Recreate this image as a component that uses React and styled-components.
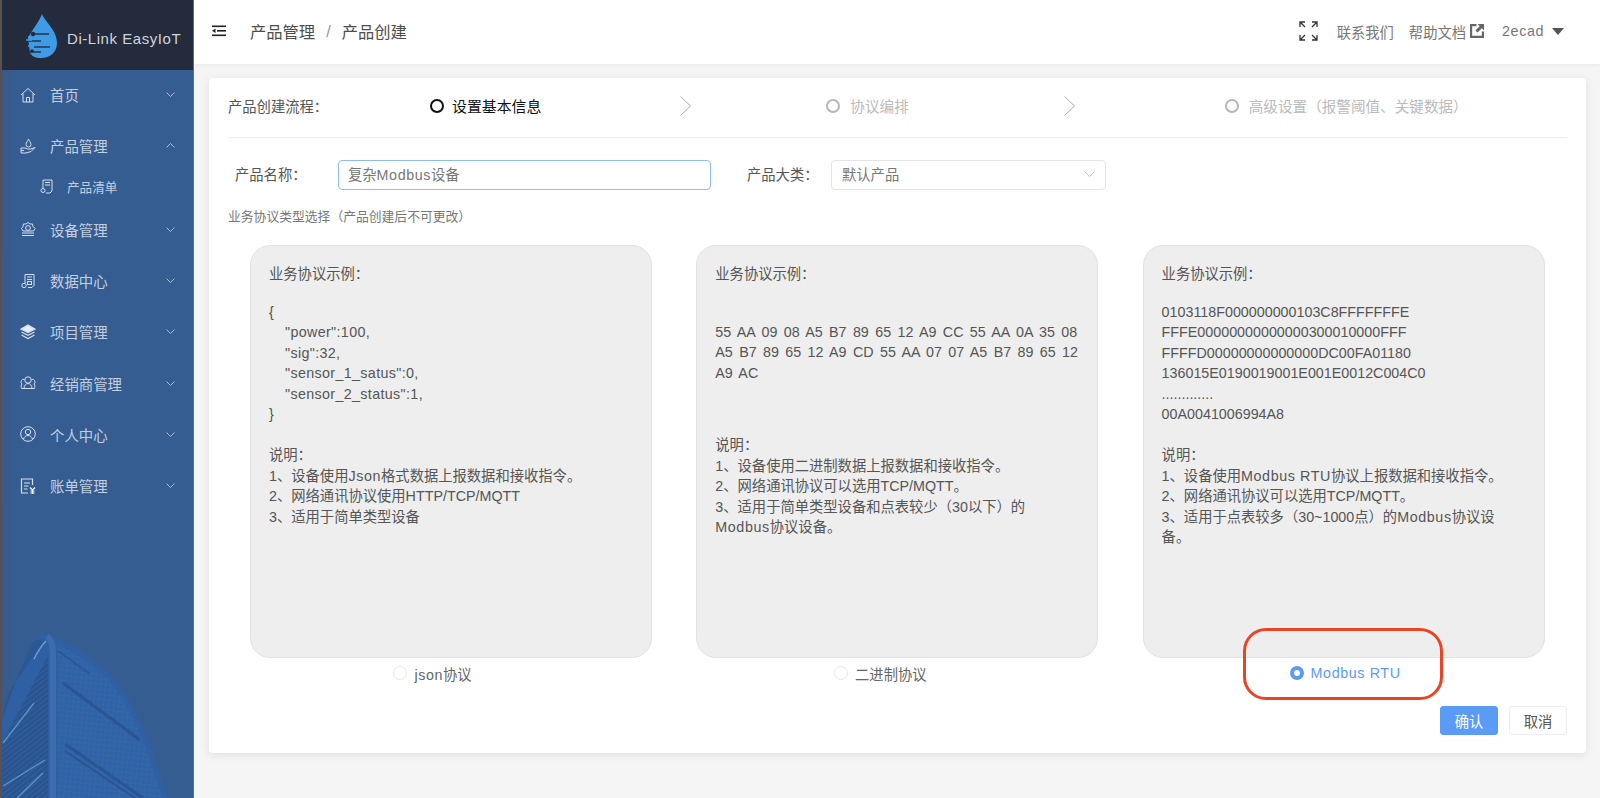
import React from "react";
import styled, { createGlobalStyle } from "styled-components";

const GlobalStyle = createGlobalStyle`
  html, body { margin: 0; padding: 0; height: 100%; }
  body {
    background: #f5f5f5;
    font-family: "Liberation Sans", "Noto Sans CJK SC", sans-serif;
    font-size: 14.3px;
    color: #555;
  }
`;

const Page = styled.div`
  display: flex;
  width: 1600px;
  height: 798px;
  overflow: hidden;
`;

/* sidebar */
const Sidebar = styled.aside`
  position: relative;
  flex: 0 0 194px;
  box-sizing: border-box;
  border-left: 2px solid #5b4f50;
  border-right: 1px solid #4670aa;
  background: linear-gradient(90deg, #3a5a88 0, #365d92 16px);
  overflow: hidden;
`;

const Brand = styled.div`
  display: flex;
  align-items: center;
  height: 70px;
  margin-right: -1px;
  padding-left: 23px;
  box-sizing: border-box;
  background: #242b3c;
`;

const BrandName = styled.span`
  margin-left: 9px;
  margin-top: 6px;
  font-size: 15px;
  letter-spacing: 0.55px;
  color: #d0d4db;
  white-space: nowrap;
`;

const MenuList = styled.nav`
  position: relative;
  z-index: 1;
  margin-top: -1px;
`;

const MenuRow = styled.div`
  display: flex;
  align-items: center;
  height: 51.3px;
  padding: 0 18px 0 18px;
  color: #c3d0e3;
  font-size: 14.4px;
`;

const SubRow = styled.div`
  display: flex;
  align-items: center;
  box-sizing: border-box;
  height: 32px;
  padding: 0 0 2px 38px;
  color: #c3d0e3;
  font-size: 12.6px;
`;

const MenuIcon = styled.svg`
  flex: 0 0 16px;
  width: 16px;
  height: 16px;
  margin-right: 14px;
  fill: none;
  stroke: #d5dfee;
  stroke-width: 1;
`;

const SubIcon = styled(MenuIcon)`
  flex: 0 0 13px;
  width: 13px;
  height: 15px;
  margin-right: 14px;
`;

const MenuLabel = styled.span`
  flex: 1;
  white-space: nowrap;
`;

const Fold = styled.svg`
  flex: 0 0 9px;
  width: 9px;
  height: 5px;
  fill: none;
  stroke: #a9bbd4;
  stroke-width: 1;
`;

const Skyline = styled.svg`
  position: absolute;
  left: -2px;
  bottom: 0;
  width: 194px;
  height: 165px;
`;

/* top bar */
const Main = styled.main`
  flex: 1;
  display: flex;
  flex-direction: column;
  min-width: 0;
`;

const TopBar = styled.header`
  display: flex;
  align-items: center;
  flex: 0 0 64px;
  box-sizing: border-box;
  padding: 0 36px 2px 18px;
  background: #fff;
  box-shadow: 0 1px 4px rgba(0, 0, 0, 0.06);
`;

const Crumbs = styled.div`
  display: flex;
  align-items: center;
  flex: 1;
  margin-left: 24px;
  font-size: 16.3px;
  color: #4d4d4d;
`;

const CrumbSep = styled.span`
  margin: 0 11px;
  color: #999;
`;

const TopLink = styled.span`
  display: inline-flex;
  align-items: center;
  color: #777;
  font-size: 14.3px;
  white-space: nowrap;
  margin-left: ${(p) => p.$gap}px;
  letter-spacing: ${(p) => p.$track || 0}px;
`;

const Caret = styled.span`
  width: 0;
  height: 0;
  margin-left: 8px;
  border-left: 6px solid transparent;
  border-right: 6px solid transparent;
  border-top: 7px solid #555;
`;

/* card */
const Content = styled.div`
  flex: 1;
  padding: 14px 14px 0 15px;
`;

const Card = styled.section`
  position: relative;
  box-sizing: border-box;
  height: 675px;
  padding: 0 19px;
  background: #fff;
  border-radius: 4px;
  box-shadow: 0 2px 10px rgba(0, 0, 0, 0.09);
`;

const StepsBar = styled.div`
  display: flex;
  align-items: center;
  height: 55px;
  padding-bottom: 4px;
  border-bottom: 1px solid #efefef;
`;

const StepsTitle = styled.span`
  flex: 0 0 202px;
  color: #555;
`;

const Step = styled.span`
  display: inline-flex;
  align-items: center;
  font-size: ${(p) => (p.$active ? "14.9px" : "14.6px")};
  color: ${(p) => (p.$active ? "#111" : "#bbb")};
  margin-right: ${(p) => p.$after}px;
  white-space: nowrap;
`;

const StepDot = styled.i`
  box-sizing: border-box;
  width: 14px;
  height: 14px;
  margin-right: ${(p) => (p.$active ? 8 : 10)}px;
  border-radius: 50%;
  border: 2px solid ${(p) => (p.$active ? "#111" : "#b5b5bb")};
`;

const StepArrow = styled.svg`
  flex: 0 0 11px;
  width: 11px;
  height: 20px;
  margin-right: ${(p) => p.$after}px;
  fill: none;
  stroke: #aaa;
  stroke-width: 1;
`;

const FormRow = styled.div`
  display: flex;
  align-items: center;
  height: 30px;
  margin-top: 22px;
  padding-left: 7px;
`;

const FieldLabel = styled.label`
  color: #555;
  white-space: nowrap;
  width: ${(p) => p.$w}px;
  margin-left: ${(p) => p.$left || 0}px;
  margin-bottom: 4px;
`;

const TextInput = styled.div`
  box-sizing: border-box;
  width: 373px;
  height: 30px;
  line-height: 29px;
  padding-left: 9px;
  border: 1.5px solid #8fbbf5;
  border-radius: 4px;
  color: #777;
`;

const SelectBox = styled.div`
  display: flex;
  align-items: center;
  justify-content: space-between;
  box-sizing: border-box;
  width: 275px;
  height: 30px;
  padding: 0 10px 3px 10px;
  border: 1px solid #e4e4ea;
  border-radius: 4px;
  color: #777;
`;

const Hint = styled.p`
  margin: 18px 0 0;
  font-size: 12.8px;
  line-height: 18px;
  color: #777;
`;

const Protocols = styled.div`
  display: grid;
  grid-template-columns: repeat(3, 402px);
  column-gap: 44.3px;
  margin-top: 19px;
  padding-left: 22px;
`;

const Protocol = styled.div`
  display: flex;
  flex-direction: column;
  align-items: center;
`;

const Sample = styled.div`
  box-sizing: border-box;
  width: 100%;
  height: 413px;
  padding: 18px;
  background: #eee;
  border: 1px solid #e2e2e2;
  border-radius: 20px;
  font-size: 14.3px;
  line-height: 20.5px;
  color: #555;
`;

const Para = styled.div`
  margin-top: ${(p) => p.$top || 0}px;
  letter-spacing: ${(p) => p.$track || 0}px;
  word-spacing: ${(p) => p.$words || 0}px;
`;

const Line = styled.div`
  white-space: pre;
  padding-left: ${(p) => p.$indent || 0}px;
`;

// latin words sit a little wider in the reference font
const Wide = styled.span`
  letter-spacing: 0.6px;
`;

const RadioRow = styled.div`
  display: flex;
  align-items: center;
  height: 30px;
  margin-right: ${(p) => p.$shift || 0}px;
  margin-left: ${(p) => p.$push || 0}px;
  color: ${(p) => (p.$on ? "#5a9bf6" : "#666")};
`;

const RadioDot = styled.i`
  box-sizing: border-box;
  width: 14px;
  height: 14px;
  margin-right: 7px;
  border-radius: 50%;
  background: ${(p) => (p.$on ? "#fff" : "transparent")};
  border: ${(p) => (p.$on ? "4px solid #5a9bf6" : "1px solid #e8e8ec")};
`;

const Actions = styled.div`
  display: flex;
  justify-content: flex-end;
  gap: 11px;
  margin-top: 18px;
`;

const Button = styled.button`
  width: 58px;
  height: 29px;
  padding: 0;
  font: inherit;
  border-radius: 3px;
  border: 1px solid ${(p) => (p.$primary ? "#5a9bf6" : "#eee")};
  background: ${(p) => (p.$primary ? "#5a9bf6" : "#fff")};
  color: ${(p) => (p.$primary ? "#fff" : "#555")};
`;

const Callout = styled.div`
  position: absolute;
  left: 1034px;
  top: 550px;
  box-sizing: border-box;
  width: 200px;
  height: 72px;
  border: 3.5px solid #ea4426;
  border-radius: 23px;
  pointer-events: none;
`;

/* drawings */
const Logo = () => (
  <svg width="33" height="46" viewBox="0 0 33 46" style={{ marginTop: 1 }}>
    <path d="M17 1C20 9 32 17 32 30C32 39 25 45 16 45C10 45 7 43 5 40L3 25C7 17 14 9 17 1Z" fill="#3f9be5" />
    <g stroke="#242b3c" strokeWidth="1.4" fill="none">
      <path d="M7 21H24" />
      <path d="M2 28H16" />
      <path d="M9 34H25" />
      <path d="M5 39H16" />
    </g>
    <g stroke="#3f9be5" strokeWidth="1.6" fill="none">
      <path d="M1 27H7" />
      <path d="M3 33H8" />
      <path d="M3 24H9" />
    </g>
    <circle cx="8" cy="21" r="2.2" fill="#242b3c" />
    <circle cx="7" cy="38" r="1.8" fill="#242b3c" />
  </svg>
);

const menuIcons = {
  home: (
    <>
      <path d="M1 8L8 1.5L15 8" />
      <path d="M3 6.5V15H13V6.5" />
      <path d="M6.5 15V10.5H9.5V15" />
    </>
  ),
  product: (
    <>
      <path d="M8.5 1C9 3 11 4.5 11 6.5A2.5 2.5 0 0 1 6 6.5C6 4.5 8 3 8.5 1Z" />
      <path d="M1 10H5L7.5 11H10.5L15 9.5L11 13.5L6 15H1Z" />
      <path d="M1 12.5H4" />
    </>
  ),
  device: (
    <>
      <path d="M8 1.5L10 3L12.5 3L13 5.5L15 7.5L13.5 10H3L1.5 7.5L3 5.5L3.5 3L6 3Z" />
      <circle cx="8" cy="7" r="2.4" />
      <path d="M2 12H14M2 14.5H14" />
    </>
  ),
  data: (
    <>
      <path d="M5 10V1.5H14V12.5L12 14.5H8" />
      <path d="M7 4H12M7 6.5H12" />
      <rect x="7.5" y="8.5" width="4" height="3" />
      <circle cx="4" cy="12.5" r="2.2" />
    </>
  ),
  users: (
    <>
      <circle cx="8" cy="5" r="3.2" />
      <path d="M4.5 4.5A2.6 2.6 0 0 0 2 9C1 10.5 1 12 1.5 13.5H14.5C15 12 15 10.5 14 9A2.6 2.6 0 0 0 11.5 4.5" />
      <path d="M4 13.5C4 10.5 6 8.5 8 8.5C10 8.5 12 10.5 12 13.5" />
    </>
  ),
  person: (
    <>
      <circle cx="8" cy="8" r="7.3" />
      <circle cx="8" cy="6" r="2.7" />
      <path d="M3.5 13C4.5 10.5 6 9.5 8 9.5C10 9.5 11.5 10.5 12.5 13" />
    </>
  ),
};

const StrokeIcon = ({ name }) => <MenuIcon viewBox="0 0 16 16">{menuIcons[name]}</MenuIcon>;

const LayersIcon = () => (
  <MenuIcon viewBox="0 0 16 16" style={{ strokeWidth: 1.2 }}>
    <path d="M8 1L15 5L8 8.5L1 5Z" fill="#e6edf6" />
    <path d="M1.5 8L8 11.3L14.5 8" />
    <path d="M1.5 11L8 14.5L14.5 11" />
  </MenuIcon>
);

const BillIcon = () => (
  <MenuIcon viewBox="0 0 16 16" style={{ strokeWidth: 1.2 }}>
    <path d="M12.5 7V1H1.5V15H8" />
    <path d="M4 5H10M4 8H8.5M4 11H7.5" />
    <path d="M10 9.5L12.5 12L15 9.5M12.5 12V16M10.5 13H14.5M10.5 15H14.5" stroke="#fff" />
  </MenuIcon>
);

const FoldMark = ({ open }) => (
  <Fold viewBox="0 0 9 5">
    <path d={open ? "M0.5 4.5L4.5 0.5L8.5 4.5" : "M0.5 0.5L4.5 4.5L8.5 0.5"} />
  </Fold>
);

const Tower = () => (
  <Skyline viewBox="0 0 194 165">
    <defs>
      <pattern id="towerGrid" width="5" height="5" patternUnits="userSpaceOnUse" patternTransform="rotate(6)">
        <rect width="5" height="5" fill="#2f62a6" />
        <path d="M0 0H5M0 0V5" stroke="#3a6cab" strokeWidth="1" />
      </pattern>
      <pattern id="towerSlats" width="4" height="4" patternUnits="userSpaceOnUse" patternTransform="rotate(-38)">
        <rect width="4" height="4" fill="#2a5490" />
        <path d="M0 0H4" stroke="#3a6aa8" strokeWidth="1" />
      </pattern>
    </defs>
    <path d="M2 88C13 55 24 28 33 8Q40 -1 48 2C76 11 100 30 118 50C140 80 155 125 168 165H2Z" fill="#2f60a3" />
    <path d="M58 12C80 22 100 36 114 54C136 84 150 125 162 165H58Z" fill="url(#towerGrid)" />
    <path d="M2 110L48 22V165H2Z" fill="url(#towerSlats)" />
    <path d="M2 86C13 55 24 28 33 9Q38 4 44 8L8 60Z" fill="#29548f" opacity="0.7" />
    <path d="M34 26Q40 14 46 8" stroke="#6b9ed0" strokeWidth="1.5" fill="none" />
    <path d="M53 165V20Q53 8 47 3" stroke="#3a6cae" strokeWidth="6" fill="none" />
    <g stroke="#2a5592" fill="none">
      <path d="M58 18L90 41" strokeWidth="1.5" />
      <path d="M63 50L140 107" strokeWidth="3" />
      <path d="M65 111L143 165" strokeWidth="3" />
      <path d="M65 118L135 165" strokeWidth="2" />
    </g>
    <g stroke="#5a92c9" fill="none" strokeWidth="1.4">
      <path d="M3 110L34 70" />
      <path d="M3 153L45 127" />
      <path d="M17 165L43 140" />
    </g>
  </Skyline>
);

const menuTop = [
  { label: "首页", icon: <StrokeIcon name="home" /> },
  { label: "产品管理", icon: <StrokeIcon name="product" />, open: true },
];

const menuRest = [
  { label: "设备管理", icon: <StrokeIcon name="device" /> },
  { label: "数据中心", icon: <StrokeIcon name="data" /> },
  { label: "项目管理", icon: <LayersIcon /> },
  { label: "经销商管理", icon: <StrokeIcon name="users" /> },
  { label: "个人中心", icon: <StrokeIcon name="person" /> },
  { label: "账单管理", icon: <BillIcon /> },
];

const renderMenu = (items) =>
  items.map((item) => (
    <MenuRow key={item.label}>
      {item.icon}
      <MenuLabel>{item.label}</MenuLabel>
      <FoldMark open={item.open} />
    </MenuRow>
  ));

const Select = () => (
  <SelectBox>
    默认产品
    <svg width="11" height="6" viewBox="0 0 11 6" fill="none" stroke="#c4c4c4">
      <path d="M0.5 0.5L5.5 5.5L10.5 0.5" />
    </svg>
  </SelectBox>
);

export default function App() {
  return (
    <Page>
      <GlobalStyle />
      <Sidebar>
        <Brand>
          <Logo />
          <BrandName>Di-Link EasyIoT</BrandName>
        </Brand>
        <MenuList>
          {renderMenu(menuTop)}
          <SubRow>
            <SubIcon viewBox="0 0 13 15">
              <path d="M3 9V1H12V12L10 14H6" />
              <path d="M5 3.5H10M5 6H10" />
              <circle cx="3" cy="11.5" r="2" />
            </SubIcon>
            产品清单
          </SubRow>
          {renderMenu(menuRest)}
        </MenuList>
        <Tower />
      </Sidebar>

      <Main>
        <TopBar>
          <svg width="14" height="12" viewBox="0 0 14 12" fill="#222">
            <rect y="0.5" width="14" height="1.6" />
            <rect x="5" y="5" width="9" height="1.6" />
            <rect y="9.5" width="14" height="1.6" />
            <path d="M0 5.8L3.5 3.6V8Z" />
          </svg>
          <Crumbs>
            产品管理
            <CrumbSep>/</CrumbSep>
            产品创建
          </Crumbs>
          <svg width="19" height="20" viewBox="0 0 19 20" fill="none" stroke="#333" strokeWidth="1.3">
            <path d="M1 6V1H6M1 1L6 6" />
            <path d="M18 6V1H13M18 1L13 6" />
            <path d="M1 14V19H6M1 19L6 14" />
            <path d="M18 14V19H13M18 19L13 14" />
          </svg>
          <TopLink $gap={19}>联系我们</TopLink>
          <TopLink $gap={15}>
            帮助文档
            <svg width="14" height="14" viewBox="0 0 13 13" style={{ marginLeft: 4 }}>
              <path d="M0 0H6V2H2V11H11V7H13V13H0Z" fill="#666" />
              <path d="M7 0H13V6L11 4L7 8L5 6L9 2Z" fill="#666" />
            </svg>
          </TopLink>
          <TopLink $gap={18} $track={0.6}>
            2ecad
            <Caret />
          </TopLink>
        </TopBar>

        <Content>
          <Card>
            <StepsBar>
              <StepsTitle>产品创建流程：</StepsTitle>
              <Step $active $after={139}>
                <StepDot $active />
                设置基本信息
              </Step>
              <StepArrow viewBox="0 0 11 20" $after={135}>
                <path d="M0.5 0.5L10.5 10L0.5 19.5" />
              </StepArrow>
              <Step $after={155}>
                <StepDot />
                协议编排
              </Step>
              <StepArrow viewBox="0 0 11 20" $after={150}>
                <path d="M0.5 0.5L10.5 10L0.5 19.5" />
              </StepArrow>
              <Step>
                <StepDot />
                高级设置（报警阈值、关键数据）
              </Step>
            </StepsBar>

            <FormRow>
              <FieldLabel $w={103}>产品名称：</FieldLabel>
              <TextInput>复杂<Wide>Modbus</Wide>设备</TextInput>
              <FieldLabel $w={84} $left={36}>产品大类：</FieldLabel>
              <Select />
            </FormRow>

            <Hint>业务协议类型选择（产品创建后不可更改）</Hint>

            <Protocols>
              <Protocol>
                <Sample>
                  <Para>业务协议示例：</Para>
                  <Para $top={17} $track={0.35}>
                    <Line>{"{"}</Line>
                    <Line $indent={16}>"power":100,</Line>
                    <Line $indent={16}>"sig":32,</Line>
                    <Line $indent={16}>"sensor_1_satus":0,</Line>
                    <Line $indent={16}>"sensor_2_status":1,</Line>
                    <Line>{"}"}</Line>
                  </Para>
                  <Para $top={20.5}>
                    <Line>说明：</Line>
                    <Line>1、设备使用<Wide>Json</Wide>格式数据上报数据和接收指令。</Line>
                    <Line>2、网络通讯协议使用HTTP/TCP/MQTT</Line>
                    <Line>3、适用于简单类型设备</Line>
                  </Para>
                </Sample>
                <RadioRow $shift={37}>
                  <RadioDot />
                  <span><Wide>json</Wide>协议</span>
                </RadioRow>
              </Protocol>

              <Protocol>
                <Sample>
                  <Para>业务协议示例：</Para>
                  <Para $top={37} $words={2.4}>
                    <Line>55 AA 09 08 A5 B7 89 65 12 A9 CC 55 AA 0A 35 08</Line>
                    <Line>A5 B7 89 65 12 A9 CD 55 AA 07 07 A5 B7 89 65 12</Line>
                    <Line>A9 AC</Line>
                  </Para>
                  <Para $top={52}>
                    <Line>说明：</Line>
                    <Line>1、设备使用二进制数据上报数据和接收指令。</Line>
                    <Line>2、网络通讯协议可以选用TCP/MQTT。</Line>
                    <Line>3、适用于简单类型设备和点表较少（30以下）的</Line>
                    <Line><Wide>Modbus</Wide>协议设备。</Line>
                  </Para>
                </Sample>
                <RadioRow $shift={34}>
                  <RadioDot />
                  二进制协议
                </RadioRow>
              </Protocol>

              <Protocol>
                <Sample>
                  <Para>业务协议示例：</Para>
                  <Para $top={17}>
                    <Line>0103118F000000000103C8FFFFFFFE</Line>
                    <Line>FFFE00000000000000300010000FFF</Line>
                    <Line>FFFFD00000000000000DC00FA01180</Line>
                    <Line>136015E0190019001E001E0012C004C0</Line>
                    <Line>.............</Line>
                    <Line>00A0041006994A8</Line>
                  </Para>
                  <Para $top={20.5}>
                    <Line>说明：</Line>
                    <Line>1、设备使用<Wide>Modbus RTU</Wide>协议上报数据和接收指令。</Line>
                    <Line>2、网络通讯协议可以选用TCP/MQTT。</Line>
                    <Line>3、适用于点表较多（30~1000点）的<Wide>Modbus</Wide>协议设</Line>
                    <Line>备。</Line>
                  </Para>
                </Sample>
                <RadioRow $on $push={3}>
                  <RadioDot $on />
                  <Wide>Modbus RTU</Wide>
                </RadioRow>
              </Protocol>
            </Protocols>

            <Actions>
              <Button $primary>确认</Button>
              <Button>取消</Button>
            </Actions>

            <Callout />
          </Card>
        </Content>
      </Main>
    </Page>
  );
}
